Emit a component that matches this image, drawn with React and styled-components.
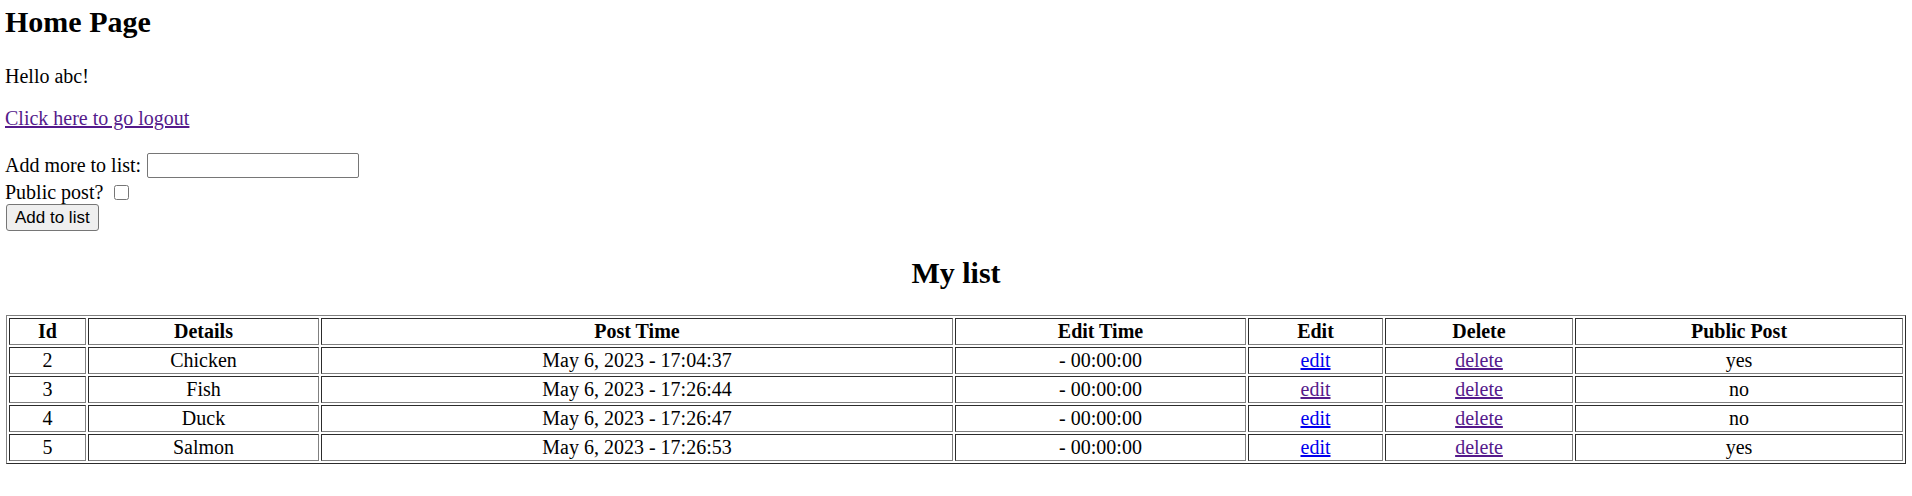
import React from "react";
import styled, { createGlobalStyle } from "styled-components";

const GlobalStyle = createGlobalStyle`
  * { box-sizing: border-box; }
  body {
    margin: 0;
    background: #fff;
    color: #000;
    font-family: "Liberation Serif", "Times New Roman", serif;
    font-size: 20px;
  }
`;

const Page = styled.div`
  padding: 0 5px;
`;

const Heading = styled.h2`
  font-size: 30px;
  font-weight: bold;
  line-height: 35px;
  margin: ${(p) => p.$top}px 0 0;
  text-align: ${(p) => (p.$center ? "center" : "left")};
`;

const Para = styled.p`
  margin: ${(p) => p.$top}px 0 0;
  line-height: 23px;
`;

const Link = styled.a`
  color: ${(p) => (p.$visited ? "#551a8b" : "#0000ee")};
  text-decoration: underline;
  cursor: pointer;
`;

const FieldRow = styled.div`
  display: flex;
  align-items: ${(p) => p.$align || "center"};
  height: ${(p) => p.$height}px;
  margin-top: ${(p) => p.$top || 0}px;
  padding-top: ${(p) => p.$pad || 0}px;
  line-height: 23px;
`;

const TextInput = styled.input`
  width: 212px;
  height: 25px;
  margin: 0 0 0 6px;
  border: 1px solid #767676;
  border-radius: 2px;
  padding: 1px 3px;
  font-family: "Liberation Sans", Arial, sans-serif;
  font-size: 16.6px;
`;

const Check = styled.input`
  width: 15px;
  height: 15px;
  margin: 4px 0 0 11px;
`;

const Button = styled.button`
  height: 27px;
  margin: 0 0 0 1px;
  padding: 0 8px;
  background: #efefef;
  border: 1px solid #767676;
  border-radius: 3px;
  color: #000;
  font-family: "Liberation Sans", Arial, sans-serif;
  font-size: 17px;
  line-height: 19px;
`;

const Table = styled.table`
  width: 1900px;
  margin: 25px 0 0 1px;
  table-layout: fixed;
  border: 1px outset grey;
  border-spacing: 2px;
`;

const Cell = styled.td`
  border: 1px inset grey;
  padding: 1px;
  line-height: 23px;
  text-align: center;
  font-weight: ${(p) => (p.$head ? "bold" : "normal")};
  white-space: nowrap;
`;

const widths = [77, 231, 632, 291, 135, 188, 328];
const heads = ["Id", "Details", "Post Time", "Edit Time", "Edit", "Delete", "Public Post"];

const rows = [
  { id: 2, details: "Chicken", post: "May 6, 2023 - 17:04:37", pub: "yes", editSeen: false },
  { id: 3, details: "Fish", post: "May 6, 2023 - 17:26:44", pub: "no", editSeen: true },
  { id: 4, details: "Duck", post: "May 6, 2023 - 17:26:47", pub: "no", editSeen: false },
  { id: 5, details: "Salmon", post: "May 6, 2023 - 17:26:53", pub: "yes", editSeen: false },
];

export default function App() {
  return (
    <Page>
      <GlobalStyle />
      <Heading $top={4}>Home Page</Heading>
      <Para $top={26}>Hello abc!</Para>
      <Para $top={19}>
        <Link $visited>Click here to go logout</Link>
      </Para>

      <FieldRow $top={23} $height={25}>
        <span>Add more to list:</span>
        <TextInput type="text" />
      </FieldRow>
      <FieldRow $height={26} $pad={3} $align="flex-start">
        <span>Public post?</span>
        <Check type="checkbox" />
      </FieldRow>
      <Button type="button">Add to list</Button>

      <Heading $top={24} $center>My list</Heading>

      <Table>
        <colgroup>
          {widths.map((w, i) => (
            <col key={i} style={{ width: w }} />
          ))}
        </colgroup>
        <tbody>
          <tr>
            {heads.map((h) => (
              <Cell as="th" key={h} $head>
                {h}
              </Cell>
            ))}
          </tr>
          {rows.map((r) => (
            <tr key={r.id}>
              <Cell>{r.id}</Cell>
              <Cell>{r.details}</Cell>
              <Cell>{r.post}</Cell>
              <Cell>- 00:00:00</Cell>
              <Cell>
                <Link $visited={r.editSeen}>edit</Link>
              </Cell>
              <Cell>
                <Link $visited>delete</Link>
              </Cell>
              <Cell>{r.pub}</Cell>
            </tr>
          ))}
        </tbody>
      </Table>
    </Page>
  );
}
